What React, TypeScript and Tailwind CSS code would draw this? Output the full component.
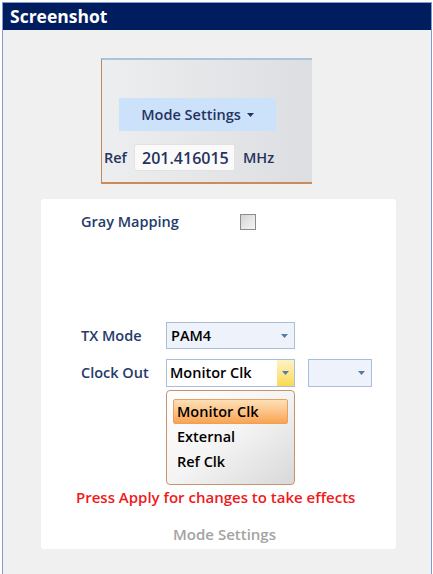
import React from 'react';

const font = { fontFamily: '"Open Sans", "Noto Sans", sans-serif' };

function Arrow({ color = '#5a78a8' }: { color?: string }) {
  return (
    <svg width="7" height="4" viewBox="0 0 7 4" className="shrink-0">
      <path d="M0 0 L7 0 L3.5 4 Z" fill={color} />
    </svg>
  );
}

function TopPanel() {
  return (
    <div className="ml-[98px] mt-[28px] w-[211px] h-[126px] border-t-2 border-t-[#a9c4dd] border-l border-l-[#c0885a] border-b-2 border-b-[#c98c5a] bg-gradient-to-r from-[#eceef0] to-[#dcdee1] flex flex-col">
      <div className="ml-[17px] mt-[38px] w-[157px] h-[33px] bg-[#cce2fb] flex items-center justify-center gap-[6px] text-[14.5px] font-semibold text-[#26335f]">
        Mode Settings
        <Arrow color="#26335f" />
      </div>
      <div className="mt-[13px] flex items-center text-[14.5px] font-semibold text-[#26335f]">
        <span className="ml-[2px] w-[30px]">Ref</span>
        <div className="w-[101px] h-[27px] bg-[#fafafa] border border-[#e2e2e2] rounded-[2px] flex items-center pl-[7px] whitespace-nowrap text-[16px]">
          201.416015
        </div>
        <span className="ml-[8px]">MHz</span>
      </div>
    </div>
  );
}

function Settings() {
  return (
    <div className="ml-[38px] mt-[15px] w-[355px] h-[350px] bg-white rounded-[3px] pl-[40px] flex flex-col text-[14.5px] font-semibold">
      <div className="mt-[13px] h-[20px] flex items-center">
        <span className="w-[159px] text-[#253a6a]">Gray Mapping</span>
        <div className="w-[16px] h-[16px] border border-[#8d8d8d] bg-gradient-to-br from-[#d4d4d4] to-[#f6f6f6]" />
      </div>

      <div className="mt-[90px] h-[27px] flex items-center">
        <span className="w-[85px] text-[#253a6a]">TX Mode</span>
        <div className="w-[129px] h-[27px] border border-[#a9bedb] bg-[#edf2fb] flex items-center justify-between pl-[4px] pr-[6px] text-black">
          PAM4
          <Arrow />
        </div>
      </div>

      <div className="mt-[10px] h-[28px] flex items-center">
        <span className="w-[85px] text-[#253a6a]">Clock Out</span>
        <div className="w-[129px] h-[28px] border border-[#a9bedb] bg-white flex items-stretch text-black">
          <span className="flex-1 flex items-center pl-[3px]">Monitor Clk</span>
          <span className="w-[17px] bg-gradient-to-b from-[#fdf3c4] to-[#fcd94a] flex items-center justify-center">
            <Arrow />
          </span>
        </div>
        <div className="ml-[13px] w-[64px] h-[28px] border border-[#a9bedb] bg-[#edf2fb] flex items-center justify-end pr-[6px]">
          <Arrow />
        </div>
      </div>

      <div className="ml-[85px] mt-[3px] w-[129px] h-[95px] border border-[#c5946a] rounded-[4px] bg-gradient-to-br from-white via-[#f4f4f4] to-[#d8d8d8] pt-[8px] px-[6px] text-black">
        <div className="h-[25px] border border-[#e8a160] rounded-[2px] bg-gradient-to-b from-[#fde0b6] to-[#f9a450] flex items-center pl-[3px]">
          Monitor Clk
        </div>
        <div className="h-[25px] flex items-center pl-[4px]">External</div>
        <div className="h-[25px] flex items-center pl-[4px]">Ref Clk</div>
      </div>

      <div className="-ml-[5px] mt-[2px] h-[20px] flex items-center text-[15px] text-[#f0191c]">
        Press Apply for changes to take effects
      </div>

      <div className="mt-[17px] h-[20px] flex items-center justify-center pr-[28px] text-[15px] text-[#a3a3a3]">
        Mode Settings
      </div>
    </div>
  );
}

export default function App() {
  return (
    <div className="w-[433px] h-[574px] bg-white pl-[2px] pt-[2px]" style={font}>
      <div className="w-[430px] h-[572px] border-x border-t border-[#7e9ccc] bg-[#f0f0f0] flex flex-col">
        <div className="h-[27px] bg-[#001e5f] flex items-center pl-[7px] text-white font-bold text-[17.5px]">
          Screenshot
        </div>
        <TopPanel />
        <Settings />
      </div>
    </div>
  );
}
